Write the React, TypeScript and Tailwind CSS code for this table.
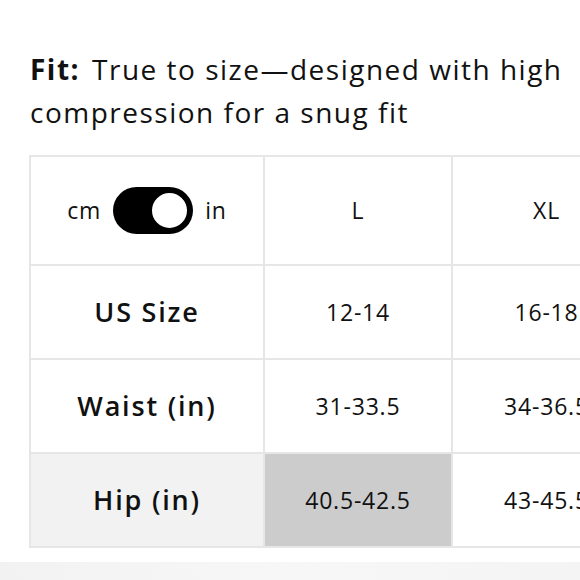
import React from 'react';

const rows = [
  { label: 'US Size', values: ['12-14', '16-18'] },
  { label: 'Waist (in)', values: ['31-33.5', '34-36.5'] },
  { label: 'Hip (in)', values: ['40.5-42.5', '43-45.5'], highlight: true },
];

const Toggle: React.FC = () => (
  <div className="flex items-center gap-[12px]">
    <span>cm</span>
    <div className="relative h-[47px] w-[80px] rounded-full bg-black">
      <div className="absolute right-[3px] top-[3px] h-[41px] w-[41px] rounded-full border-[3px] border-black bg-white" />
    </div>
    <span>in</span>
  </div>
);

export default function App() {
  return (
    <div
      className="relative h-[580px] w-[580px] overflow-hidden bg-white text-[#111]"
      style={{ fontFamily: '"Open Sans", "Liberation Sans", sans-serif' }}
    >
      <div className="w-[620px] px-[30px] pt-[48px]">
        <p className="text-[28px] leading-[43px] tracking-[1.5px]">
          <span className="font-bold">Fit:</span>
          <span className="ml-[12px]">True to size—designed with high</span>
          <br />
          compression for a snug fit
        </p>
      </div>

      <table className="ml-[29px] mt-[21px] w-[611px] min-w-[611px] table-fixed border-collapse text-[23px] tracking-[0.8px]">
        <colgroup>
          <col className="w-[234px]" />
          <col className="w-[188px]" />
          <col className="w-[189px]" />
        </colgroup>
        <tbody>
          <tr className="h-[109px]">
            <td className="border-2 border-[#e6e6e6]">
              <div className="flex justify-center">
                <Toggle />
              </div>
            </td>
            <td className="border-2 border-[#e6e6e6] text-center">L</td>
            <td className="border-2 border-[#e6e6e6] text-center">XL</td>
          </tr>
          {rows.map(r => (
            <tr key={r.label} className="h-[94px]">
              <td
                className={`border-2 border-[#e6e6e6] text-center text-[27px] font-semibold tracking-[1.8px] ${
                  r.highlight ? 'bg-[#f2f2f2]' : ''
                }`}
              >
                {r.label}
              </td>
              <td className={`border-2 border-[#e6e6e6] text-center ${r.highlight ? 'bg-[#cccccc]' : ''}`}>
                {r.values[0]}
              </td>
              <td className="whitespace-nowrap border-2 border-[#e6e6e6] text-center">{r.values[1]}</td>
            </tr>
          ))}
        </tbody>
      </table>

      <div className="absolute bottom-0 left-0 h-[18px] w-full bg-gradient-to-r from-[#f2f2f2] via-[#f7f7f7] to-[#f4f4f4]" />
    </div>
  );
}
